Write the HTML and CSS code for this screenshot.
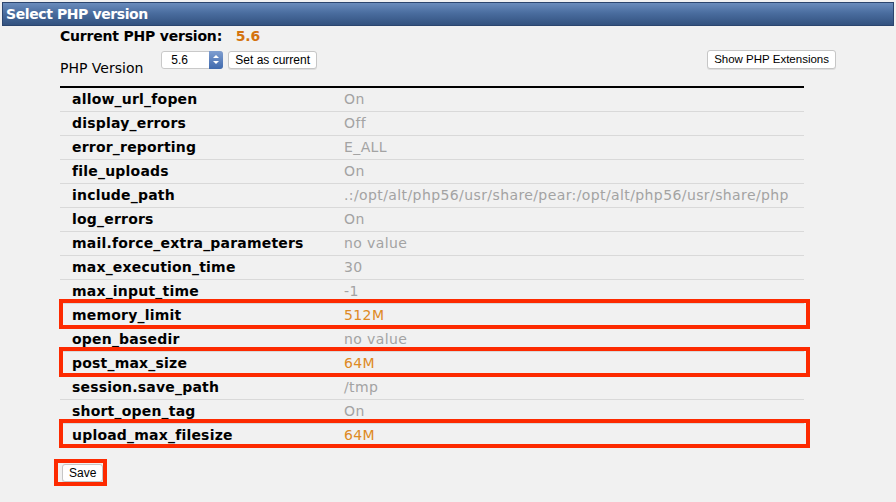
FILE: index.html
```html
<!doctype html>
<html>
<head>
<meta charset="utf-8">
<title>Select PHP version</title>
<link rel="stylesheet" href="styles.css">
</head>
<body>
<div class="title_bar">Select PHP version</div>

<div class="content">
	<div class="current">Current PHP version: <span class="cur_ver">5.6</span></div>

	<div class="ver_row">
		<span class="ver_label">PHP Version</span>
		<span class="ver_select">5.6<i class="arrows"></i></span>
		<span class="btn">Set as current</span>
		<span class="btn btn_ext">Show PHP Extensions</span>
	</div>

	<div class="opts">
		<div class="opt"><b>allow_url_fopen</b><span>On</span></div>
		<div class="opt"><b>display_errors</b><span>Off</span></div>
		<div class="opt"><b>error_reporting</b><span>E_ALL</span></div>
		<div class="opt"><b>file_uploads</b><span>On</span></div>
		<div class="opt"><b>include_path</b><span>.:/opt/alt/php56/usr/share/pear:/opt/alt/php56/usr/share/php</span></div>
		<div class="opt"><b>log_errors</b><span>On</span></div>
		<div class="opt"><b>mail.force_extra_parameters</b><span>no value</span></div>
		<div class="opt"><b>max_execution_time</b><span>30</span></div>
		<div class="opt"><b>max_input_time</b><span>-1</span></div>
		<div class="opt mark"><b>memory_limit</b><span class="set">512M</span></div>
		<div class="opt"><b>open_basedir</b><span>no value</span></div>
		<div class="opt mark"><b>post_max_size</b><span class="set">64M</span></div>
		<div class="opt"><b>session.save_path</b><span>/tmp</span></div>
		<div class="opt"><b>short_open_tag</b><span>On</span></div>
		<div class="opt mark last"><b>upload_max_filesize</b><span class="set">64M</span></div>
	</div>

	<div class="save_row">
		<span class="btn btn_save">Save</span>
	</div>
</div>
</body>
</html>
```

FILE: styles.css
```css
*{ margin:0; padding:0;}
body{ background:#f1f1f1; font-family:"DejaVu Sans", Verdana, sans-serif; color:#000; width:896px; height:502px; overflow:hidden;}

.title_bar{ margin:2px 2px 0 2px; height:22px; line-height:22px; padding-left:3px; border:1px solid #2b456e; color:#fff; font-size:14px; font-weight:bold; letter-spacing:-0.4px; background:linear-gradient(#6a8cbc, #4a6d9f 45%, #33527f);}

.content{ padding-left:60px;}

.current{ margin-top:1px; font-size:14px; font-weight:bold; letter-spacing:-0.2px; line-height:18px;}
.cur_ver{ color:#d4730e; margin-left:9px;}

.ver_row{ display:flex; align-items:flex-start; width:776px; margin-top:5px; height:32px; font-size:12px;}
.ver_label{ font-size:14px; padding-top:10px; margin-right:18px;}
.ver_select{ position:relative; width:51px; height:16px; line-height:16px; padding-left:9px; margin-top:1px; background:#fff; border:1px solid #c9c9c9; border-radius:3px; font-family:"Liberation Sans", Arial, sans-serif;}
.arrows{ position:absolute; right:-1px; top:-1px; width:14px; height:18px; border-radius:0 3px 3px 0; background:linear-gradient(#7f9ed0, #3f69ad);}
.arrows:before,.arrows:after{ content:""; position:absolute; left:4px; border-left:3px solid transparent; border-right:3px solid transparent;}
.arrows:before{ top:4px; border-bottom:3px solid #fff;}
.arrows:after{ top:10px; border-top:3px solid #fff;}

.btn{ display:inline-block; height:16px; line-height:16px; padding:0 6px; background:#fff; border:1px solid #c6c6c6; border-radius:3px; font-family:"Liberation Sans", Arial, sans-serif; font-size:12px; box-shadow:0 1px 0 #ddd;}
.ver_row .btn{ margin-left:5px; margin-top:1px;}
.ver_row .btn_ext{ margin-left:auto; margin-top:0; padding:0 6px; font-size:11.5px; height:17px; line-height:17px;}

.opts{ width:744px; border-top:2px solid #000; margin-top:4px;}
.opt{ position:relative; display:flex; height:23px; line-height:23px; border-bottom:1px solid #d9d9d9; font-size:14px;}
.opt b{ width:272px; padding-left:12px; letter-spacing:0.2px;}
.opt span{ color:#a3a3a3; font-size:14px; letter-spacing:0.4px;}
.opt span.set{ color:#de8a24;}
.opt.last{ border-bottom:none;}

/* red marker frame round the changed values */
.mark:after{ content:""; position:absolute; left:-1px; right:-6px; top:-5px; bottom:-2px; border:4px solid #fd2a00;}
.mark.last:after{ bottom:-1px;}

.save_row{ margin-top:15px; padding-left:2px;}
.btn_save{ position:relative; padding:0 6px;}
.btn_save:after{ content:""; position:absolute; left:-9px; top:-6px; right:-5px; bottom:-5px; border:4px solid #fd2a00;}
```
